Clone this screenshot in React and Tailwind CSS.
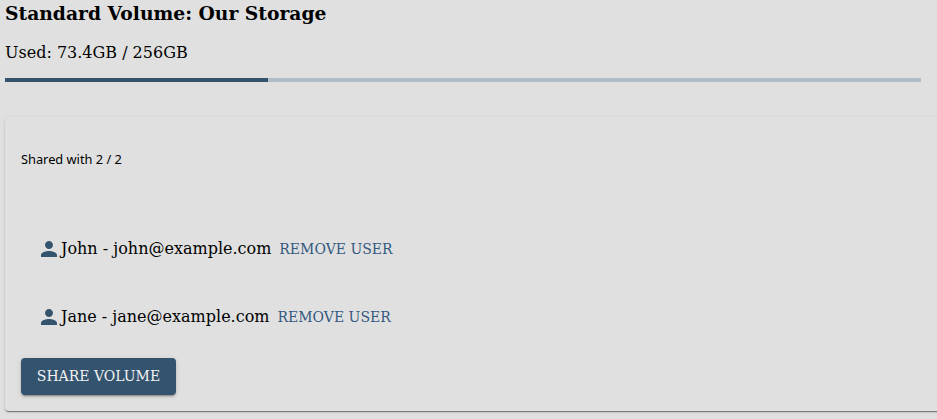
import React from 'react'

const users = [
    { name: 'John', email: 'john@example.com', top: 'pt-0' },
    { name: 'Jane', email: 'jane@example.com', top: 'pt-[44px]' },
]

function PersonIcon() {
    return (
        <svg viewBox="0 0 24 24" className="w-6 h-6 shrink-0 fill-[#34536f]">
            <path d="M12 12c2.21 0 4-1.79 4-4s-1.79-4-4-4-4 1.79-4 4 1.79 4 4 4zm0 2c-2.67 0-8 1.34-8 4v2h16v-2c0-2.66-5.33-4-8-4z" />
        </svg>
    )
}

export default function App() {
    return (
        <div className="w-[937px] h-[419px] overflow-hidden bg-[#e0e0e0] font-['DejaVu_Serif',serif] text-[#000000]">
            <div className="pl-[5px] pr-4">
                <h2 className="text-[18.72px] leading-[27px] font-bold">Standard Volume: Our Storage</h2>
                <p className="mt-[14px] text-[16px] leading-[24px]">Used: 73.4GB / 256GB</p>
                <div className="mt-[13px] h-1 bg-[#b0bec9]">
                    <div className="h-full bg-[#34536f]" style={{ width: `${(73.4 / 256) * 100}%` }} />
                </div>
            </div>

            <div className="mt-[35px] ml-[5px] w-[960px] h-[294px] rounded bg-[#e0e0e0] pl-4 shadow-[0_2px_1px_-1px_rgba(0,0,0,0.3),0_1px_1px_0_rgba(0,0,0,0.2),0_1px_3px_0_rgba(0,0,0,0.14)]">
                <p className="pt-[33px] font-['Noto_Sans',sans-serif] text-[12.8px] leading-[18px]">Shared with 2 / 2</p>

                <ul className="pt-[69px] pl-4">
                    {users.map((user) => (
                        <li key={user.name} className={user.top}>
                            <div className="flex items-center h-6">
                                <PersonIcon />
                                <span className="text-[16px] leading-6">{user.name} - {user.email}</span>
                                <button className="ml-2 text-[14px] leading-6 uppercase text-[#34587f]">Remove user</button>
                            </div>
                        </li>
                    ))}
                </ul>

                <button className="mt-[29px] h-[37px] w-[155px] rounded bg-[#34536f] text-[14px] uppercase text-[#f2f2f2] shadow-[0_3px_1px_-2px_rgba(0,0,0,0.2),0_2px_2px_0_rgba(0,0,0,0.14),0_1px_5px_0_rgba(0,0,0,0.12)]">
                    Share volume
                </button>
            </div>
        </div>
    )
}
